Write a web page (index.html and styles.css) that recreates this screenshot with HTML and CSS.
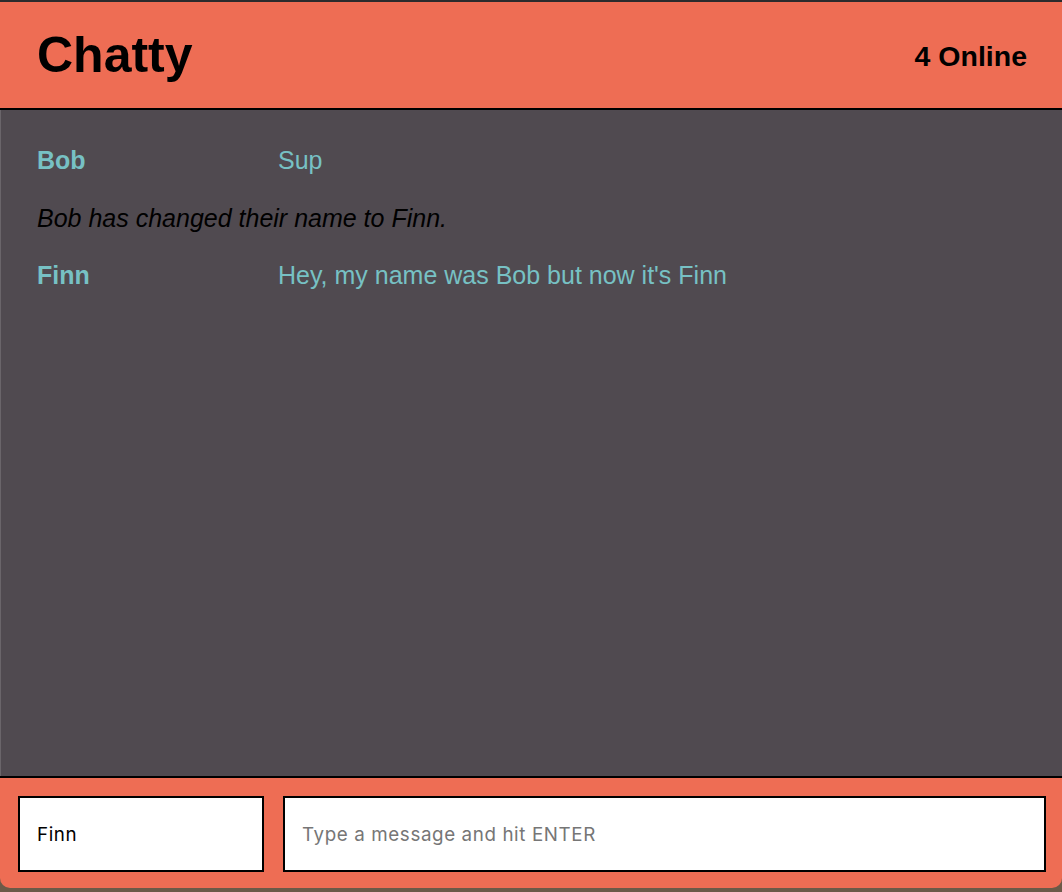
FILE: index.html
```html
<!DOCTYPE html>
<html lang="en">
<head>
<meta charset="utf-8">
<title>Chatty</title>
<link rel="stylesheet" href="styles.css">
</head>
<body>
<div class="app">
  <header class="navbar">
    <h1 class="brand">Chatty</h1>
    <span class="online">4 Online</span>
  </header>
  <main class="messages">
    <div class="message">
      <span class="username">Bob</span>
      <span class="content">Sup</span>
    </div>
    <div class="notification">Bob has changed their name to Finn.</div>
    <div class="message">
      <span class="username">Finn</span>
      <span class="content">Hey, my name was Bob but now it's Finn</span>
    </div>
  </main>
  <footer class="chatbar">
    <input class="chatbar-username" type="text" value="Finn">
    <input class="chatbar-message" type="text" placeholder="Type a message and hit ENTER">
  </footer>
</div>
</body>
</html>
```
FILE: styles.css
```css
html, body {
  margin: 0;
  padding: 0;
}
body {
  background: #6b5a48;
  height: 892px;
  overflow: hidden;
  font-family: "Liberation Sans", Arial, sans-serif;
}
.app {
  height: 888px;
  display: flex;
  flex-direction: column;
  border-top: 2px solid #2b2b2d;
  border-radius: 0 0 10px 10px;
  overflow: hidden;
  box-sizing: border-box;
}
.navbar {
  height: 108px;
  box-sizing: border-box;
  background: #ee6d54;
  border-bottom: 2px solid #000;
  display: flex;
  align-items: center;
  justify-content: space-between;
  padding: 0 35px 0 37px;
  color: #000;
}
.brand {
  margin: 0;
  font-size: 50px;
  font-weight: bold;
  line-height: 1;
}
.online {
  font-size: 28.5px;
  font-weight: bold;
  padding-top: 2px;
}
.messages {
  flex: 1;
  background: #504a50;
  border-left: 1px solid #6a656a;
  padding: 32px 37px 0 36px;
  display: flex;
  flex-direction: column;
  gap: 20px;
  font-size: 25px;
  line-height: 37.5px;
}
.message {
  display: flex;
  color: #77c1c4;
}
.username {
  flex: 0 0 241px;
  font-weight: bold;
}
.content {
  flex: 1;
}
.notification {
  font-style: italic;
  color: #000;
}
.chatbar {
  height: 112px;
  box-sizing: border-box;
  background: #ee6d54;
  border-top: 2px solid #000;
  padding: 18px 16px 16px 18px;
  display: flex;
  gap: 19px;
}
.chatbar input {
  height: 76px;
  box-sizing: border-box;
  border: 2px solid #000;
  background: #fff;
  margin: 0;
  padding: 0 16px 0 17px;
  font-family: Inter, "Noto Sans", sans-serif;
  font-size: 18.8px;
  letter-spacing: 0.6px;
  color: #000;
  outline: none;
}
.chatbar-username {
  flex: none;
  width: 246px;
}
.chatbar-message {
  flex: 1;
  width: auto;
  min-width: 0;
  padding-left: 16px;
}
.chatbar-message::placeholder {
  color: #767676;
}
```
